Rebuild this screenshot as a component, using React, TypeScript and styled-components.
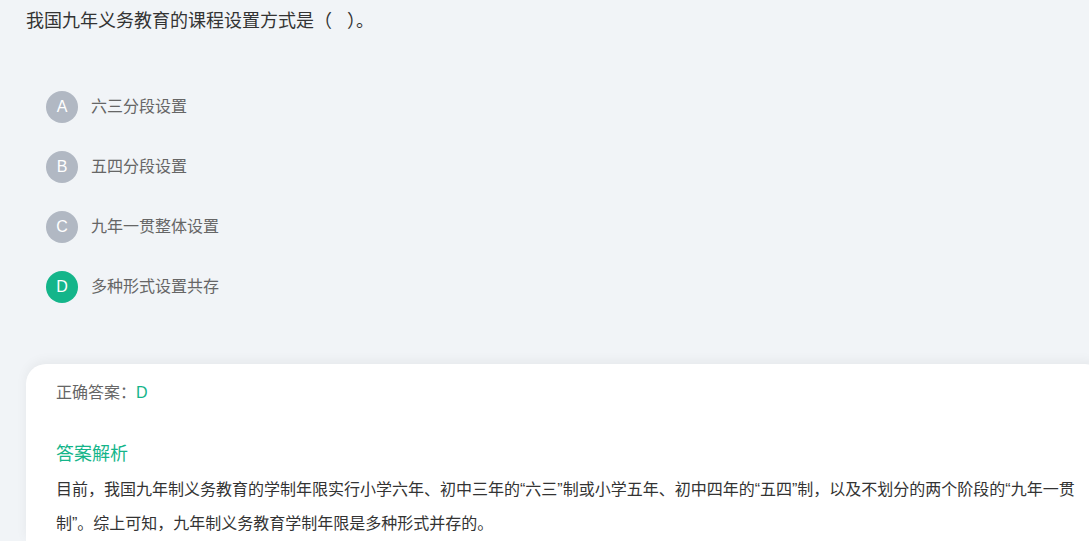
import React from "react";
import styled, { createGlobalStyle } from "styled-components";

const Global = createGlobalStyle`
  html, body { margin: 0; padding: 0; background: #f1f4f7; overflow: hidden; }
  body { font-family: "Liberation Sans", "Noto Sans CJK SC", sans-serif; }
`;

const Page = styled.div`
  width: 1089px;
  height: 541px;
  padding: 9px 0 0 26px;
  box-sizing: border-box;
  display: flex;
  flex-direction: column;
`;

const Question = styled.div`
  font-size: 18px;
  line-height: 24px;
  color: #333;
`;

const Options = styled.div`
  display: flex;
  flex-direction: column;
  gap: 28px;
  margin: 58px 0 0 20px;
`;

const Option = styled.div`
  display: flex;
  align-items: center;
  gap: 13px;
  height: 32px;
  line-height: 32px;
`;

const Badge = styled.span<{ $correct?: boolean }>`
  flex: none;
  width: 32px;
  height: 32px;
  line-height: 32px;
  border-radius: 50%;
  background: ${(p) => (p.$correct ? "#14b58a" : "#b1b8c3")};
  color: #fff;
  font-size: 16px;
  text-align: center;
`;

const OptionText = styled.span`
  font-size: 16px;
  line-height: 32px;
  color: #666;
`;

const Card = styled.div`
  margin-top: 61px;
  width: 1079px;
  flex: 1;
  background: #fff;
  border-radius: 20px 20px 0 0;
  box-shadow: 0 -3px 12px rgba(0, 0, 0, 0.05);
  padding: 17px 30px 0;
  box-sizing: border-box;
`;

const Answer = styled.div`
  font-size: 16px;
  line-height: 24px;
  color: #666;
`;

const Green = styled.span`
  color: #14b58a;
`;

const Title = styled.div`
  margin-top: 37px;
  font-size: 18px;
  line-height: 24px;
  color: #14b58a;
`;

const Body = styled.div`
  margin-top: 7px;
  font-size: 16px;
  line-height: 34px;
  color: #333;
`;

const options = [
  { k: "A", t: "六三分段设置" },
  { k: "B", t: "五四分段设置" },
  { k: "C", t: "九年一贯整体设置" },
  { k: "D", t: "多种形式设置共存", c: true },
];

export default function App() {
  return (
    <>
      <Global />
      <Page>
        <Question>我国九年义务教育的课程设置方式是（&nbsp;&nbsp;&nbsp;）。</Question>
        <Options>
          {options.map((o) => (
            <Option key={o.k}>
              <Badge $correct={o.c}>{o.k}</Badge>
              <OptionText>{o.t}</OptionText>
            </Option>
          ))}
        </Options>
        <Card>
          <Answer>
            正确答案：<Green>D</Green>
          </Answer>
          <Title>答案解析</Title>
          <Body>
            目前，我国九年制义务教育的学制年限实行小学六年、初中三年的“六三”制或小学五年、初中四年的“五四”制，以及不划分的两个阶段的“九年一贯制”。综上可知，九年制义务教育学制年限是多种形式并存的。
          </Body>
        </Card>
      </Page>
    </>
  );
}
